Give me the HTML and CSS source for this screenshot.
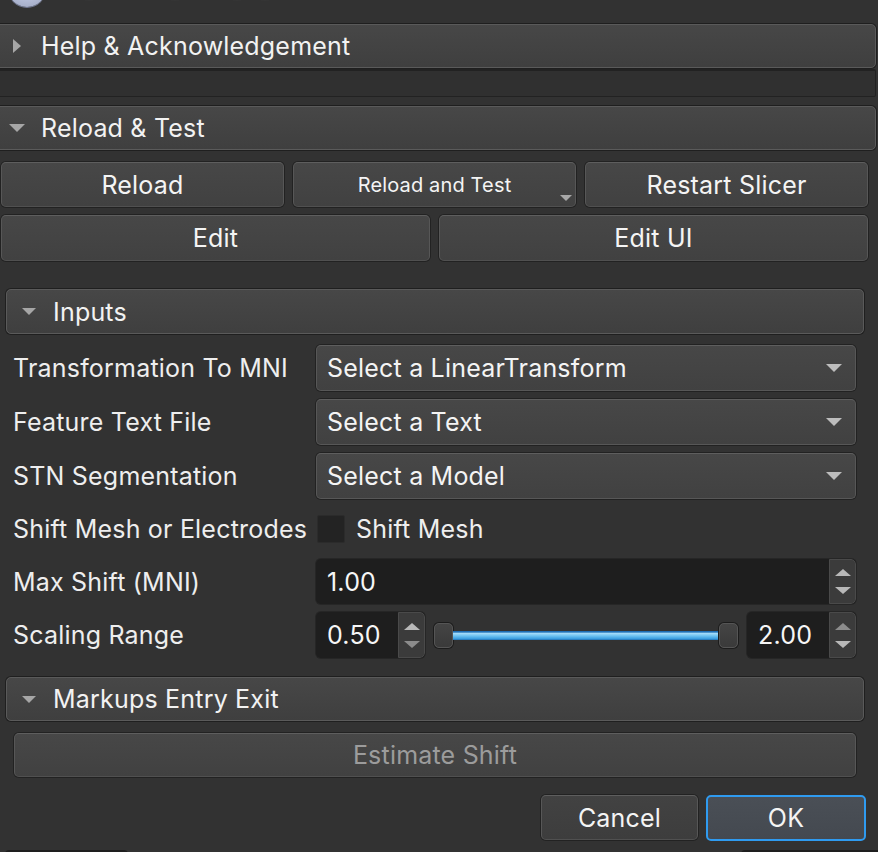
FILE: index.html
```html
<!DOCTYPE html>
<html>
<head>
<meta charset="utf-8">
<link rel="stylesheet" href="styles.css">
</head>
<body>
<div class="app">
  <div class="toolbar">
    <span class="logo"></span>
    <span class="ghost g1"></span>
    <span class="ghost g2"></span>
    <span class="ghost g3"></span>
    <span class="ghost g4"></span>
  </div>

  <div class="hdr hdr-wide">
    <svg class="tri-r" width="8" height="14" viewBox="0 0 8 14"><path d="M0 0 L8 7 L0 14 Z"/></svg>
    <span>Help &amp; Acknowledgement</span>
  </div>
  <div class="help-body"></div>

  <div class="hdr hdr-wide hdr-reload">
    <svg class="tri-d" width="16" height="8" viewBox="0 0 16 8"><path d="M0 0 L16 0 L8 8 Z"/></svg>
    <span>Reload &amp; Test</span>
  </div>

  <div class="btn-row3">
    <div class="btn">Reload</div>
    <div class="btn btn-small">Reload and Test<svg class="menu-ind" width="12" height="6" viewBox="0 0 12 6"><path d="M0 0 L12 0 L6 6 Z"/></svg></div>
    <div class="btn">Restart Slicer</div>
  </div>
  <div class="btn-row2">
    <div class="btn">Edit</div>
    <div class="btn">Edit UI</div>
  </div>

  <div class="hdr hdr-sub hdr-inputs">
    <svg class="tri-d sub" width="14" height="7" viewBox="0 0 14 7"><path d="M0 0 L14 0 L7 7 Z"/></svg>
    <span>Inputs</span>
  </div>

  <div class="form">
    <div class="label">Transformation To MNI</div>
    <div class="combo"><span>Select a LinearTransform</span><svg class="combo-arrow" width="16" height="8" viewBox="0 0 16 8"><path d="M0 0 L16 0 L8 8 Z"/></svg></div>

    <div class="label">Feature Text File</div>
    <div class="combo"><span>Select a Text</span><svg class="combo-arrow" width="16" height="8" viewBox="0 0 16 8"><path d="M0 0 L16 0 L8 8 Z"/></svg></div>

    <div class="label">STN Segmentation</div>
    <div class="combo"><span>Select a Model</span><svg class="combo-arrow" width="16" height="8" viewBox="0 0 16 8"><path d="M0 0 L16 0 L8 8 Z"/></svg></div>

    <div class="label">Shift Mesh or Electrodes</div>
    <div class="check-row"><span class="checkbox"></span><span>Shift Mesh</span></div>

    <div class="label">Max Shift (MNI)</div>
    <div class="spinbox">
      <span class="val">1.00</span>
      <span class="spin-btns">
        <svg width="16" height="7" viewBox="0 0 16 7"><path d="M0 7 L16 7 L8 0 Z"/></svg>
        <svg width="16" height="7" viewBox="0 0 16 7"><path d="M0 0 L16 0 L8 7 Z"/></svg>
      </span>
    </div>

    <div class="label">Scaling Range</div>
    <div class="range-row">
      <div class="spinbox spin-sm">
        <span class="val">0.50</span>
        <span class="spin-btns">
          <svg width="16" height="7" viewBox="0 0 16 7"><path d="M0 7 L16 7 L8 0 Z"/></svg>
          <svg class="dim" width="16" height="7" viewBox="0 0 16 7"><path d="M0 0 L16 0 L8 7 Z"/></svg>
        </span>
      </div>
      <div class="slider">
        <span class="handle"></span>
        <span class="groove"></span>
        <span class="handle"></span>
      </div>
      <div class="spinbox spin-sm">
        <span class="val">2.00</span>
        <span class="spin-btns">
          <svg class="dim" width="16" height="7" viewBox="0 0 16 7"><path d="M0 7 L16 7 L8 0 Z"/></svg>
          <svg width="16" height="7" viewBox="0 0 16 7"><path d="M0 0 L16 0 L8 7 Z"/></svg>
        </span>
      </div>
    </div>
  </div>

  <div class="hdr hdr-sub hdr-markups">
    <svg class="tri-d sub" width="14" height="7" viewBox="0 0 14 7"><path d="M0 0 L14 0 L7 7 Z"/></svg>
    <span>Markups Entry Exit</span>
  </div>

  <div class="btn btn-disabled estimate">Estimate Shift</div>

  <div class="dialog-btns">
    <div class="btn cancel">Cancel</div>
    <div class="btn ok">OK</div>
  </div>

  <div class="bottom-strip">
    <span class="bs1"></span>
    <span class="bs2"></span>
  </div>
</div>
</body>
</html>
```

FILE: styles.css
```css
* { box-sizing: border-box; }

html, body {
  margin: 0;
  padding: 0;
  background: #323232;
}

body {
  width: 878px;
  height: 852px;
  overflow: hidden;
  font-family: "Inter", "Liberation Sans", sans-serif;
  font-size: 25px;
  letter-spacing: 0.2px;
  color: #f0f0f0;
}

.app {
  display: flex;
  flex-direction: column;
  width: 878px;
  height: 852px;
}

/* toolbar remnant */
.toolbar {
  height: 24px;
  flex: none;
  display: flex;
  align-items: flex-start;
  overflow: hidden;
  position: relative;
}
.logo {
  width: 38px;
  height: 38px;
  margin-left: 8px;
  margin-top: -31px;
  border-radius: 50%;
  background: radial-gradient(circle at 50% 30%, #c9d0e6 0%, #b4bcd6 60%, #9aa2bd 100%);
  box-shadow: 0 1px 0 #6f7690;
}
.ghost {
  width: 14px;
  height: 5px;
  margin-top: -4px;
  border-radius: 50%;
  background: #363636;
}
.g1 { margin-left: 36px; }
.g2 { margin-left: 72px; }
.g3 { margin-left: 48px; }
.g4 { margin-left: 14px; }

/* collapsible section headers */
.hdr {
  flex: none;
  height: 44px;
  display: flex;
  align-items: center;
  border: 1px solid #5a5a5a;
  border-radius: 5px;
  box-shadow: 0 0 0 1px #1f1f1f;
  background: linear-gradient(#474747, #3f3f3f);
  color: #f2f2f2;
}
.hdr-wide {
  margin-left: -6px;
  width: 882px;
}
.hdr .tri-r {
  fill: #a6a6a6;
  margin-left: 18px;
  margin-right: 20px;
}
.hdr .tri-d {
  fill: #a6a6a6;
  margin-left: 14px;
  margin-right: 16px;
}
.hdr .tri-d.sub {
  margin-left: 15px;
  margin-right: 17px;
}
.help-body {
  flex: none;
  margin-top: 1px;
  margin-left: -6px;
  width: 882px;
  height: 28px;
  border: 1px solid #222222;
  border-top-width: 2px;
  border-radius: 0 2px 2px 0;
  background: #303030;
}
.hdr-reload {
  margin-top: 9px;
}

/* push buttons */
.btn {
  display: flex;
  align-items: center;
  justify-content: center;
  height: 45px;
  border: 1px solid #575757;
  border-top-color: #5e5e5e;
  border-bottom-color: #505050;
  border-radius: 5px;
  box-shadow: 0 0 0 1px #222222;
  background: linear-gradient(#474747, #414141);
  color: #f4f4f4;
  position: relative;
}
.btn-row3 {
  flex: none;
  margin-top: 12px;
  margin-left: 1px;
  width: 867px;
  display: grid;
  grid-template-columns: repeat(3, 1fr);
  column-gap: 9px;
}
.btn-small {
  font-size: 20px;
  letter-spacing: 0.15px;
}
.menu-ind {
  position: absolute;
  right: 3px;
  bottom: 5px;
  fill: #a8a8a8;
}
.btn-row2 {
  flex: none;
  margin-top: 8px;
  margin-left: 1px;
  width: 867px;
  display: grid;
  grid-template-columns: 1fr 1fr;
  column-gap: 9px;
}
.btn-row2 .btn {
  height: 46px;
}

.hdr-sub {
  margin-left: 6px;
  width: 858px;
  height: 45px;
}
.hdr-inputs {
  margin-top: 28px;
}

/* form */
.form {
  flex: none;
  margin-top: 11px;
  margin-left: 13px;
  width: 843px;
  display: grid;
  grid-template-columns: 303px 1fr;
  grid-template-rows: 46px 46px 46px 44px 45px 46px;
  row-gap: 8px;
}
.label {
  display: flex;
  align-items: center;
  color: #eeeeee;
  white-space: nowrap;
}
.combo {
  display: flex;
  align-items: center;
  justify-content: space-between;
  padding-left: 10px;
  padding-right: 13px;
  border: 1px solid #575757;
  border-top-color: #5e5e5e;
  border-radius: 5px;
  box-shadow: 0 0 0 1px #222222;
  background: linear-gradient(#474747, #414141);
  color: #f4f4f4;
}
.combo-arrow {
  fill: #bdbdbd;
}
.check-row {
  display: flex;
  align-items: center;
  gap: 11px;
  color: #eeeeee;
}
.checkbox {
  width: 28px;
  height: 28px;
  margin-left: 1px;
  border-radius: 2px;
  background: #232323;
  border: 1px solid #2b2b2b;
}

.spinbox {
  display: flex;
  border-radius: 5px;
  background: #1e1e1e;
  box-shadow: 0 0 0 1px #262626;
  overflow: hidden;
}
.spinbox .val {
  flex: 1;
  display: flex;
  align-items: center;
  padding-left: 11px;
  color: #f6f6f6;
}
.spin-btns {
  width: 27px;
  flex: none;
  display: flex;
  flex-direction: column;
  align-items: center;
  justify-content: center;
  gap: 11px;
  background: #3b3b3b;
  border: 1px solid #4a4a4a;
  border-radius: 0 5px 5px 0;
}
.spin-btns svg { fill: #b8b8b8; }
.spin-btns svg.dim { fill: #8c8c8c; }

.range-row {
  display: flex;
  align-items: stretch;
  gap: 9px;
}
.spin-sm {
  width: 109px;
  flex: none;
}
.slider {
  flex: 1;
  display: flex;
  align-items: center;
}
.handle {
  width: 19px;
  height: 25px;
  flex: none;
  border-radius: 5px;
  background: linear-gradient(#444444, #3a3a3a);
  border: 1px solid #555555;
  box-shadow: 0 0 0 1px #1c1c1c;
}
.groove {
  flex: 1;
  height: 9px;
  background: linear-gradient(#1d6db3 0%, #1d6db3 12%, #a6dcfa 25%, #6cc2f1 55%, #3c9ee0 85%, #1f70b4 100%);
}

.hdr-markups {
  margin-top: 19px;
  height: 44px;
}

.estimate {
  flex: none;
  margin-top: 12px;
  margin-left: 14px;
  width: 842px;
  height: 44px;
  color: #9c9c9c;
}

.dialog-btns {
  flex: none;
  margin-top: 18px;
  display: flex;
  justify-content: flex-end;
  gap: 8px;
  padding-right: 12px;
}
.cancel {
  width: 157px;
  height: 45px;
  background: linear-gradient(#424242, #3d3d3d);
}
.ok {
  width: 160px;
  height: 46px;
  border: 2px solid #2f9bf0;
  box-shadow: none;
  background: linear-gradient(#4a4f56, #444950);
}

.bottom-strip {
  flex: none;
  margin-top: 9px;
  display: flex;
  justify-content: space-between;
  height: 4px;
}
.bs1 {
  margin-left: 5px;
  width: 123px;
  border-radius: 4px 4px 0 0;
  background: #1e1e1e;
}
.bs2 {
  width: 137px;
  border-radius: 4px 0 0 0;
  background: #1e1e1e;
}
```
